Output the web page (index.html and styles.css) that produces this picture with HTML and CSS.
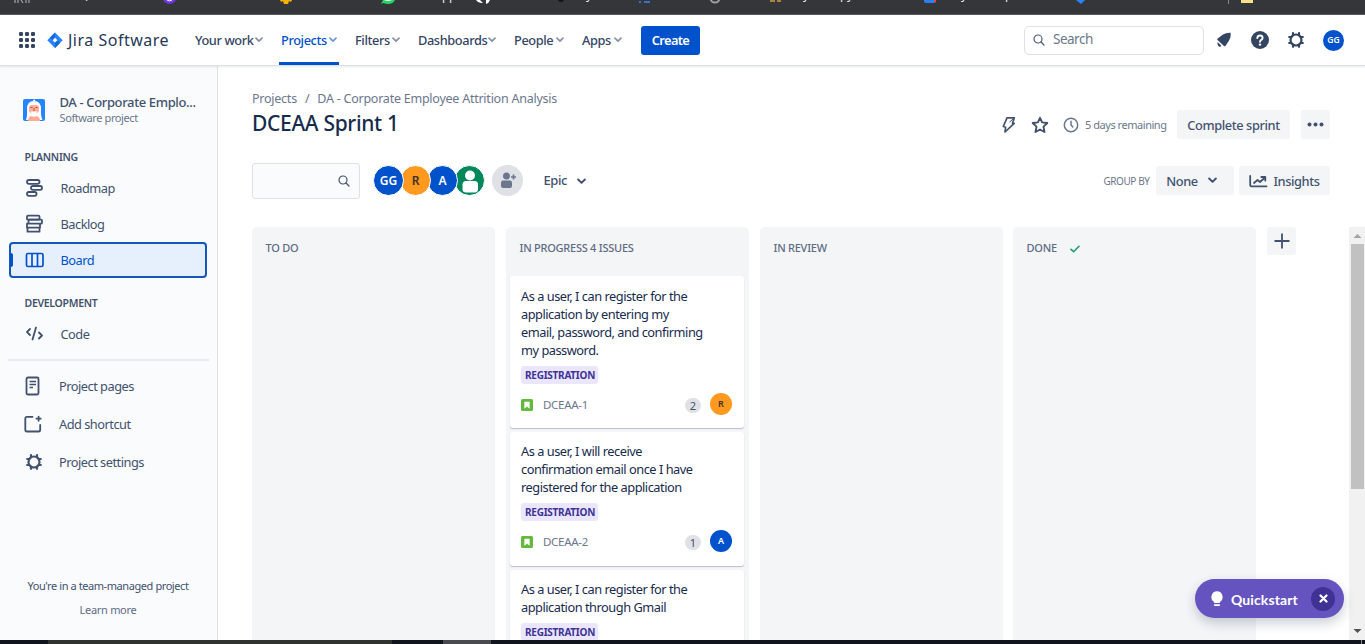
FILE: index.html
```html
<!DOCTYPE html>
<html lang="en">
<head>
<meta charset="utf-8">
<title>DCEAA Sprint 1 - Jira Software</title>
<link rel="stylesheet" href="styles.css">
</head>
<body>
<svg width="0" height="0" class="defs">
  <symbol id="chev" viewBox="0 0 8 6"><path d="M1 1.200 4 4.200 7 1.200" fill="none" stroke="currentColor" stroke-width="1.700" stroke-linecap="round" stroke-linejoin="round"/></symbol>
  <symbol id="lens" viewBox="0 0 12 12"><circle cx="5" cy="5" r="4" fill="none" stroke="currentColor" stroke-width="1.200"/><path d="m8 8 3 3" stroke="currentColor" stroke-width="1.300" stroke-linecap="round"/></symbol>
  <symbol id="gear" viewBox="0 0 16 16"><circle cx="8" cy="8" r="5.500" fill="none" stroke="currentColor" stroke-width="2.200"/><path d="M5 1.200v1.500M11 1.200v1.500M5 13.300v1.500M11 13.300v1.500M1.200 5h1.500M13.300 5h1.500M1.200 11h1.500M13.300 11h1.500" stroke="currentColor" stroke-width="2.200" stroke-linecap="round"/></symbol>
  <symbol id="story" viewBox="0 0 12 12"><rect width="12" height="12" rx="1.500" fill="#63ba3c"/><path d="M3.700 3h4.600v6.200L6 7.300 3.700 9.200z" fill="#fff" stroke="#fff" stroke-width=".6" stroke-linejoin="round"/></symbol>
</svg>

<svg class="bookmarks" width="1365" height="15" viewBox="0 0 1365 15">
  <g class="bm-text">
    <text x="85" y="-2">p</text><text x="442" y="0">p</text><text x="449" y="0">p</text>
    <text x="586" y="-1">y</text><text x="803" y="-1">y</text><text x="840" y="-1">p</text><text x="847" y="-1">y</text>
    <text x="961" y="-1">y</text><text x="1005" y="-1">p</text>
  </g>
  <path d="M15 0v3M18 0v3M21 0l2 3M26 0v3M29 0v3" stroke="#a5a2b8" stroke-width="1.200"/>
  <circle cx="169.500" cy="-3" r="7" fill="#6e35e0"/><path d="M167 0q2 2 5 0" stroke="#fff" fill="none"/>
  <path d="M280 0h12l-1 2-2-1-1 3h-4l-1-3-2 1z" fill="#f4b400"/>
  <path d="M381 4l2-4h12q-3 6-12 3z" fill="#25d366"/><path d="M384 0h8q-4 2-8 0" fill="#fff"/>
  <path d="M476 0h4l3 3h-2q-3 0-5-3m10 0h4q-1 3-4 4z" fill="#fff"/><circle cx="561" cy="-1" r="3" fill="#121316"/>
  <path d="M639 2h2m3 0h6" stroke="#3f6fc2" stroke-width="2"/>
  <circle cx="715" cy="-2" r="4.500" fill="none" stroke="#9aa0a6" stroke-width="2"/>
  <path d="M770 0h5v2h-5zm7 0h4v2h-4z" fill="#a78343"/>
  <path d="M924 0h12v1q0 2-2 2h-8q-2 0-2-2z" fill="#2d7df6"/><path d="M934 0h2v2h-2z" fill="#ea4335"/>
  <path d="M1076 0h9l-4 4z" fill="#2684ff"/><path d="M1228.500 0v4" stroke="#85888c"/><path d="M1241 0h12v3h-12z" fill="#fbe08a"/>
  <path d="M0 14.500h1365" stroke="#57585c"/>
</svg>

<header class="topnav">
  <svg class="switcher" width="16" height="16" viewBox="0 0 16 16" fill="#344563"><rect width="4" height="4" rx="1.200"/><rect x="6" width="4" height="4" rx="1.200"/><rect x="12" width="4" height="4" rx="1.200"/><rect y="6" width="4" height="4" rx="1.200"/><rect x="6" y="6" width="4" height="4" rx="1.200"/><rect x="12" y="6" width="4" height="4" rx="1.200"/><rect y="12" width="4" height="4" rx="1.200"/><rect x="6" y="12" width="4" height="4" rx="1.200"/><rect x="12" y="12" width="4" height="4" rx="1.200"/></svg>
  <svg class="mark" width="16" height="17" viewBox="0 0 16 17"><path d="M8 .5 15.700 8.200 8 16 .3 8.200z" fill="#2684ff"/><path d="M8 .5v5.400L5.700 8.200 3 5.500zM8 16v-5.400l2.300-2.400 2.700 2.900z" fill="#1a66dc"/><path d="m8 5.800 2.400 2.400L8 10.600 5.600 8.200z" fill="#fff"/></svg>
  <span class="brand">Jira Software</span>
  <nav class="menu">
    <a class="m-work"><span>Your work</span><svg width="8" height="6"><use href="#chev"/></svg></a>
    <a class="m-projects active"><span>Projects</span><svg width="8" height="6"><use href="#chev"/></svg></a>
    <a class="m-filters"><span>Filters</span><svg width="8" height="6"><use href="#chev"/></svg></a>
    <a class="m-dash"><span>Dashboards</span><svg width="8" height="6"><use href="#chev"/></svg></a>
    <a class="m-people"><span>People</span><svg width="8" height="6"><use href="#chev"/></svg></a>
    <a class="m-apps"><span>Apps</span><svg width="8" height="6"><use href="#chev"/></svg></a>
  </nav>
  <button class="create">Create</button>
  <div class="search"><svg width="12" height="12"><use href="#lens"/></svg><span>Search</span></div>
  <div class="tools">
    <svg width="16" height="16" viewBox="0 0 16 16" fill="#344563"><path d="M7 2.600Q10.500.4 14.700.7q.4 4.600-1.600 7.800L9.600 13.800Q8.800 14.800 8 14L1.500 8q-.8-.8.200-1.500zM1.600 10l4 4q-2 1.300-3.300.1T1.600 10z"/></svg>
    <svg width="18" height="18" viewBox="0 0 18 18"><circle cx="9" cy="9" r="9" fill="#344563"/><path d="M6.300 7Q6.500 4.500 9 4.500t2.600 2.300q0 1.300-1.300 2Q9 9.500 9 10.700" fill="none" stroke="#fff" stroke-width="1.900" stroke-linecap="round"/><circle cx="9" cy="13.600" r="1.200" fill="#fff"/></svg>
    <svg width="16" height="16" color="#344563"><use href="#gear"/></svg>
    <span class="avatar me">GG</span>
  </div>
</header>

<div class="page">
  <aside class="sidebar">
    <div class="project">
      <svg width="22" height="22" viewBox="0 0 22 22"><rect width="22" height="22" rx="2" fill="#2684ff"/><path d="M3 21Q4.500 17 4 10 4 2 11 2t7 8q-.5 7 1.500 11z" fill="#fff"/><path d="M10 2l1-2 1.500 2z" fill="#fff"/><rect x="6" y="6" width="10" height="8" rx="3" fill="#ffb09c"/><path d="M7.500 8.500h2m3 0h2" stroke="#b5483c" stroke-width="1.200"/><rect x="10" y="9" width="2" height="3" fill="#f4765b"/><path d="M8 12.500h6v1q-3 1-6 0z" fill="#fff"/><path d="M5 22q0-4 3-5 3 1.500 6 0 3 1 3 5z" fill="#ffab93"/></svg>
      <div><div class="pname">DA - Corporate Emplo...</div><div class="ptype">Software project</div></div>
    </div>
    <h2 class="planning">PLANNING</h2>
    <a class="item"><svg width="19" height="20" viewBox="0 0 19 20" fill="none" stroke="#42526e" stroke-width="1.800"><rect x="2" y="2" width="12.500" height="3.800" rx="1.700"/><rect x="6" y="8" width="11" height="3.800" rx="1.700"/><rect x="2" y="14" width="9.500" height="3.800" rx="1.700"/></svg><span>Roadmap</span></a>
    <a class="item"><svg width="19" height="20" viewBox="0 0 19 20" fill="none" stroke="#42526e" stroke-width="1.800" stroke-linejoin="round"><rect x="2" y="1.700" width="12.500" height="4" rx="1"/><rect x="3.500" y="5.700" width="13.500" height="4" rx="1"/><path d="M3.500 9.700H2v4h13v-4M2.500 13.700v4h12v-4"/></svg><span>Backlog</span></a>
    <a class="item selected"><svg width="19" height="20" viewBox="0 0 19 20" fill="none" stroke="#0052cc" stroke-width="1.700"><rect x="1.500" y="3.500" width="16.500" height="13" rx="1.500"/><path d="M7 3.500v13M12.500 3.500v13"/></svg><span>Board</span></a>
    <h2 class="dev">DEVELOPMENT</h2>
    <a class="item"><svg width="19" height="20" viewBox="0 0 19 20" fill="none" stroke="#42526e" stroke-width="1.800" stroke-linecap="round" stroke-linejoin="round"><path d="M5 5 2 8l3 3M14 8.500l3 3-3 3M11 3.500 7.500 15.500"/></svg><span>Code</span></a>
    <hr>
    <a class="item low"><svg width="18" height="20" viewBox="0 0 18 20" fill="none" stroke="#42526e" stroke-width="1.800"><rect x="2.500" y="1.500" width="12" height="17" rx="1.500"/><path d="M5.500 5.500h6.500M5.500 8.500h6.500M5.500 11.500h3.500" stroke-width="1.500"/></svg><span>Project pages</span></a>
    <a class="item low"><svg width="18" height="20" viewBox="0 0 18 20" fill="none" stroke="#42526e" stroke-width="1.800" stroke-linecap="round"><path d="M8.500 2.900H3Q1.300 2.900 1.300 4.600v11.200q0 1.700 1.700 1.700h11.500q1.700 0 1.700-1.700V11M14.600 2.600v4.200M12.500 4.700h4.200"/></svg><span>Add shortcut</span></a>
    <a class="item low"><svg width="18" height="20" color="#42526e" viewBox="-2 -2 18 20"><use href="#gear" width="16" height="16"/></svg><span>Project settings</span></a>
    <div class="managed"><p><span>You're in a team-managed project</span></p><p class="learn">Learn more</p></div>
  </aside>

  <main>
    <div class="crumbs"><span>Projects</span><span class="slash">/</span><span>DA - Corporate Employee Attrition Analysis</span></div>
    <div class="titlebar">
      <h1>DCEAA Sprint 1</h1>
      <svg class="bolt" width="14" height="18" viewBox="0 0 14 18" fill="none" stroke="#42526e" stroke-width="1.700" stroke-linejoin="round"><path d="M5 1.800h7.300L10.500 7.200l1.700.2L3 16l.6-4.800L1.300 10.500z"/><path d="M12.300 1.800 7.500 6.200" stroke-width="1"/></svg>
      <svg class="star" width="18" height="18" viewBox="0 0 18 18" fill="none" stroke="#42526e" stroke-width="1.900" stroke-linejoin="round"><path d="m9 1.800 2.100 4.600 5.200.6-3.800 3.600 1 5.400L9 13.500 4.500 16l1-5.400L1.700 7l5.200-.6z"/></svg>
      <svg class="clock" width="16" height="16" viewBox="0 0 16 16" fill="none" stroke="#6b778c" stroke-width="1.500" stroke-linecap="round"><circle cx="8" cy="8" r="6.700"/><path d="M8 4.300V8l1.800 2"/></svg>
      <span class="days">5 days remaining</span>
      <button class="btn complete"><span>Complete sprint</span></button>
      <button class="btn more"><svg width="17" height="5" viewBox="0 0 17 5" fill="#42526e"><circle cx="2.500" cy="2.500" r="2"/><circle cx="8.500" cy="2.500" r="2"/><circle cx="14.500" cy="2.500" r="2"/></svg></button>
    </div>
    <div class="filters">
      <div class="find"><svg width="12" height="12"><use href="#lens"/></svg></div>
      <div class="people">
        <span class="avatar blue front">GG</span><span class="avatar orange">R</span><span class="avatar blue third">A</span><span class="avatar green"><svg width="28" height="28" viewBox="0 0 28 28" fill="#fff"><circle cx="14" cy="8.500" r="5"/><rect x="6.500" y="14" width="15.500" height="11.500" rx="3.500"/></svg></span>
      </div>
      <span class="adduser"><svg width="31" height="31" viewBox="0 0 31 31" fill="#6b778c"><circle cx="14.500" cy="11" r="3.500"/><rect x="9" y="15.500" width="11" height="7.500" rx="2"/><path d="M21.500 9.500v5M19 12h5" stroke="#6b778c" stroke-width="1.700"/></svg></span>
      <span class="epic">Epic</span><svg class="epic-chev" width="9" height="7"><use href="#chev"/></svg>
      <span class="group">GROUP BY</span>
      <button class="btn none"><span>None</span><svg width="9" height="7"><use href="#chev"/></svg></button>
      <button class="btn insights"><svg width="19" height="14" viewBox="0 0 19 14" fill="none" stroke="#42526e" stroke-width="1.800" stroke-linecap="round" stroke-linejoin="round"><path d="M1.200 2v9q0 1.300 1.300 1.300h15M5 9l3.500-3L11 8l5-4.500M12.300 3h4v3.700"/></svg><span>Insights</span></button>
    </div>
    <div class="board">
      <section class="col"><h3><span>TO DO</span></h3></section>
      <section class="col">
        <h3><span>IN PROGRESS 4 ISSUES</span></h3>
        <article class="card first"><p><span>As a user, I can register for the</span><br><span>application by entering my</span><br><span>email, password, and confirming</span><br><span>my password.</span></p><span class="tag">REGISTRATION</span>
          <footer><svg width="12" height="12"><use href="#story"/></svg><span class="key">DCEAA-1</span><span class="count">2</span><span class="avatar orange">R</span></footer></article>
        <article class="card second"><p><span>As a user, I will receive</span><br><span>confirmation email once I have</span><br><span>registered for the application</span></p><span class="tag">REGISTRATION</span>
          <footer><svg width="12" height="12"><use href="#story"/></svg><span class="key">DCEAA-2</span><span class="count">1</span><span class="avatar blue">A</span></footer></article>
        <article class="card"><p><span>As a user, I can register for the</span><br><span>application through Gmail</span></p><span class="tag">REGISTRATION</span></article>
      </section>
      <section class="col"><h3><span>IN REVIEW</span></h3></section>
      <section class="col last"><h3 class="done"><span>DONE</span><svg width="10" height="8" viewBox="0 0 10 8"><path d="m1 4.300 2.600 2.400L9 1.300" fill="none" stroke="#1f9a6a" stroke-width="1.600" stroke-linecap="round"/></svg></h3></section>
      <button class="btn addcol"><svg width="16" height="16" viewBox="0 0 16 16"><path d="M8 .5v15M.5 8h15" stroke="#42526e" stroke-width="1.800"/></svg></button>
      <div class="scroll"><svg width="16" height="17" viewBox="0 0 16 17"><path d="M4.500 11 8.500 7l4 4z" fill="#a3a3a3"/></svg><i></i><svg width="16" height="17" viewBox="0 0 16 17"><path d="M4.500 6 8.500 10l4-4z" fill="#505050"/></svg></div>
    </div>
  </main>
</div>
<div class="taskbar"><i></i><b></b><em></em></div>

<div class="quickstart">
  <svg width="12" height="16" viewBox="0 0 12 16" fill="#fff"><path d="M6 .3a5.800 5.800 0 0 1 3.200 10.500L8.500 12h-5l-.7-1.200A5.800 5.800 0 0 1 6 .3zM3 13.200h6v1q0 .8-1 .8H4q-1 0-1-.8z"/></svg>
  <span>Quickstart</span>
  <b><svg width="9" height="9" viewBox="0 0 9 9"><path d="m1.500 1.500 6 6m0-6-6 6" stroke="#fff" stroke-width="2.200" stroke-linecap="round"/></svg></b>
</div>
</body>
</html>
```
FILE: styles.css
```css
* { box-sizing: border-box; margin: 0; padding: 0; }
html { height: 644px; overflow: hidden; }
body { width: 1365px; height: 644px; overflow: hidden; display: flex; flex-direction: column; background: #fff; color: #42526e; font: 13px/18px "Noto Sans", "Open Sans", sans-serif; position: relative; }
svg { display: block; flex: none; }
span { white-space: nowrap; }
button { font: inherit; color: inherit; border: 0; }
.defs { position: absolute; }

.bookmarks { background: #35363a; }
.bm-text { fill: #e8eaed; font-size: 12px; }

.topnav { height: 51px; flex: none; display: flex; align-items: center; padding-left: 19px; border-bottom: 1px solid #dcdfe5; box-shadow: 0 1px 2px #091e4218; position: relative; z-index: 2; }
.mark { margin: 0 5px 0 12px; }
.brand { width: 127px; margin-top: -1px; font: 16px/22px "Noto Sans", sans-serif; color: #253858; letter-spacing: .5px; }
.menu { display: flex; height: 51px; }
.menu a { display: flex; align-items: center; justify-content: space-between; height: 50px; color: #344563; font-weight: 500; font-size: 12.800px; letter-spacing: -.4px; }
.menu svg { color: #8993a4; }
.m-work { width: 68px; }
.menu .m-projects { width: 60px; margin-left: 16px; padding: 3px 2px 0; color: #0052cc; border-bottom: 3px solid #0052cc; }
.menu .active svg { color: #6c9ae0; }
.m-filters { width: 45px; margin-left: 16px; }
.m-dash { width: 78px; margin-left: 18px; }
.m-people { width: 50px; margin-left: 18px; }
.m-apps { width: 40px; margin-left: 18px; }
.create { width: 59px; height: 29px; margin-left: 19px; border-radius: 3px; background: #0052cc; color: #fff; font-weight: 600; font-size: 12.800px; letter-spacing: -.6px; }
.search { width: 180px; height: 29px; margin-left: auto; display: flex; align-items: center; gap: 8px; padding-left: 8px; border: 1px solid #dfe1e6; border-radius: 5px; color: #6b778c; }
.search svg { color: #505f79; }
.search span { font-size: 13.500px; letter-spacing: -.5px; margin-top: -2px; }
.tools { display: flex; align-items: center; width: 161px; padding-left: 12px; }
.tools svg:nth-child(2) { margin: 0 19px; }
.avatar { display: flex; align-items: center; justify-content: center; border-radius: 50%; color: #fff; font-weight: 600; }
.me { width: 21px; height: 21px; margin-left: 19px; background: #0052cc; font-size: 8.500px; }

.page { display: flex; flex: 1; min-height: 0; }
.sidebar { width: 218px; flex: none; display: flex; flex-direction: column; background: #fafbfc; border-right: 1px solid #dfe1e5; padding: 28px 10px 0 9px; }
.project { display: flex; gap: 14.500px; padding-left: 14px; height: 54px; }
.project svg { margin-top: 5px; }
.pname { font-weight: 500; line-height: 17px; letter-spacing: -.37px; white-space: nowrap; }
.ptype { font-size: 11px; line-height: 15px; margin-top: -1px; color: #6b778c; letter-spacing: -.4px; }
h2 { font-size: 10.500px; line-height: 16px; padding-left: 15.500px; font-weight: 600; letter-spacing: -.3px; }
.planning { margin: 1px 0 5px; }
.dev { margin: 17px 0 5px; }
.item { display: flex; align-items: center; height: 36px; flex: none; padding-left: 16px; gap: 16.500px; font-size: 12.800px; letter-spacing: -.5px; }
.selected { border: 2px solid #1558bc; border-radius: 4px; background: #e6effc; color: #0052cc; padding-left: 14px; width: 198px; position: relative; }
.selected::before { content: ""; position: absolute; left: -1px; top: 9px; width: 3px; height: 14px; border-radius: 0 2px 2px 0; background: #0052cc; }
hr { border: 0; height: 2px; background: #e8eaee; width: 201px; margin: 7px 0 6px -1px; flex: none; }
.low { height: 38px; padding-left: 15px; gap: 17px; }
.managed { margin-top: auto; padding-bottom: 21px; text-align: center; font-size: 11px; letter-spacing: -.42px; }
.managed .learn { margin-top: 6px; color: #5e6c84; letter-spacing: -.3px; }

main { flex: 1; min-width: 0; display: flex; flex-direction: column; padding: 24px 0 0 34px; }
.crumbs { display: flex; height: 18px; color: #6b778c; font-size: 12.500px; letter-spacing: -.24px; }
.slash { margin: 0 8px; }
.titlebar { display: flex; align-items: center; height: 34px; margin-right: 35px; }
h1 { font-size: 21px; line-height: 28px; font-weight: 500; letter-spacing: -.32px; color: #172b4d; margin: -5px auto 0 0; }
.star { margin: 0 14px 0 15px; }
.days { margin-left: 6px; width: 82px; font-size: 11px; letter-spacing: -.46px; color: #6b778c; }
.btn { display: flex; align-items: center; justify-content: center; height: 29px; border-radius: 3px; background: #f4f5f7; font-weight: 500; font-size: 12.800px; letter-spacing: -.4px; }
.complete { width: 113px; margin: -1px 11px 0 10px; }
.more { width: 29px; margin-top: -1px; }
.filters { display: flex; align-items: center; height: 36px; margin: 21px 35px 0 0; }
.find { width: 108px; height: 36px; display: flex; align-items: center; justify-content: flex-end; padding-right: 9px; border: 1px solid #dfe1e6; border-radius: 3px; background: #fafbfc; }
.people { display: flex; margin-left: 13px; margin-top: -1px; }
.people .avatar { width: 31px; height: 31px; margin-right: -4px; border: 1px solid #fff; font-size: 12px; }
.front { z-index: 4; position: relative; }
.people .orange { position: relative; z-index: 3; }
.third { position: relative; z-index: 2; }
.blue { background: #0052cc; }
.orange { background: #ff991f; color: #42321f; }
.green { background: #00875a; }
.adduser { width: 31px; height: 31px; margin: -1px 0 0 11px; border-radius: 50%; background: #dfe1e6; }
.epic { margin: -2px 0 0 20.500px; width: 33px; font-weight: 500; letter-spacing: -.4px; }
.group { margin: -1px 6.500px 0 auto; font-size: 10px; color: #6b778c; letter-spacing: -.42px; }
.filters .btn { margin-top: -1px; }
.none { width: 78px; gap: 10px; padding-right: 7px; }
.insights { width: 91px; margin-left: 5px; gap: 5px; }

.board { flex: 1; min-height: 0; display: flex; gap: 11px; margin-top: 28px; overflow: hidden; }
.col { width: 243px; flex: none; background: #f4f5f7; border-radius: 5px 5px 0 0; padding: 12px 5px 0 4px; overflow: hidden; }
.last { margin-left: -1px; }
h3 { font-size: 11px; line-height: 18px; font-weight: 500; color: #5e6c84; padding-left: 9.500px; letter-spacing: -.25px; }
.done { display: flex; align-items: center; gap: 13px; }
.done svg { margin-top: 2px; }
.card { height: 134px; margin-top: 4px; padding: 10px 11px; border-radius: 3px; background: #fff; box-shadow: 0 1px 1px #091e4240; }
.card.first { height: 152px; margin-top: 19px; padding-top: 11px; }
.card p { color: #172b4d; font-size: 12.800px; letter-spacing: -.48px; }
.tag { display: block; width: 77px; height: 18px; margin-top: 7px; border-radius: 3px; padding-left: 4px; background: #eae6ff; color: #403294; font-size: 10px; font-weight: 700; line-height: 18px; letter-spacing: -.25px; }
.card footer { display: flex; align-items: center; height: 22px; margin-top: 9px; }
.card footer svg { margin-top: 1px; }
.key { margin: 1px 0 0 10px; font-size: 11.500px; color: #6b778c; letter-spacing: -.3px; }
.count { width: 16px; height: 15px; margin: 2px 9px 0 auto; border-radius: 8px; background: #dfe1e6; text-align: center; font-size: 11px; line-height: 15px; }
.card .avatar { width: 22px; height: 22px; font-size: 9px; margin-right: 1px; }
.addcol { width: 29px; height: 28px; }
.scroll { width: 16px; margin-left: auto; background: #f1f1f1; display: flex; flex-direction: column; }
.scroll i { width: 13px; height: 245px; margin: 0 0 auto 2px; background: #c1c1c1; }
.taskbar { height: 4px; flex: none; display: flex; background: #10141d; }
.taskbar i { margin-left: 48px; width: 344px; background: #30322f; }
.taskbar b { margin-left: 51px; width: 48px; background: #484a50; }
.taskbar em { margin-left: 870px; width: 1px; background: #888; }
.quickstart { position: absolute; z-index: 5; left: 1195px; top: 579px; width: 149px; height: 39px; border-radius: 20px; background: #6554c0; box-shadow: 0 5px 12px #091e4238; display: flex; align-items: center; padding: 0 9px 0 16px; color: #fff; font: 700 14px/20px Lato, sans-serif; }
.quickstart span { margin-left: 8px; padding-top: 3px; letter-spacing: .1px; }
.quickstart b { width: 24px; height: 24px; margin-left: auto; border-radius: 50%; background: #403294; display: flex; align-items: center; justify-content: center; }
```
